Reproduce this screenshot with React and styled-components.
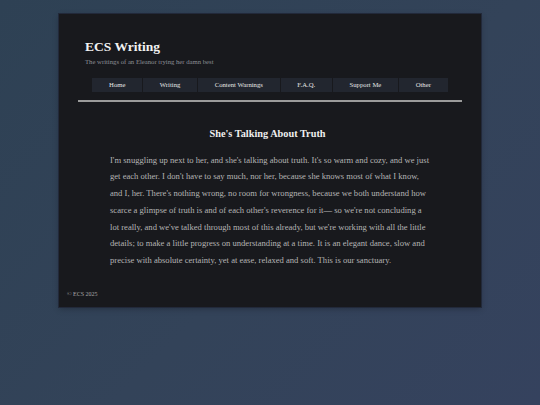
import React from "react";
import styled, { createGlobalStyle } from "styled-components";

const Global = createGlobalStyle`
  html, body { margin: 0; padding: 0; }
  body {
    min-height: 405px;
    background: linear-gradient(135deg, #2e4154 0%, #334359 55%, #35425e 100%);
    font-family: "Liberation Serif", "Times New Roman", serif;
  }
`;

const Page = styled.div`
  padding-top: 14px;
  display: flex;
  justify-content: center;
`;

const Container = styled.div`
  width: 422px;
  background: #18191d;
  box-shadow: 0 0 0 1px #22293a, 0 2px 6px rgba(0, 0, 0, 0.25);
  padding: 25px 0 9px;
  box-sizing: border-box;
`;

const Header = styled.header`
  padding-left: 26px;
`;

const Title = styled.h1`
  margin: 0;
  font-size: 13.5px;
  line-height: 15.5px;
  font-weight: bold;
  color: #f2f2f2;
`;

const Subtitle = styled.p`
  margin: 3px 0 0;
  font-size: 6.7px;
  line-height: 7.8px;
  color: #8d8f95;
`;

const Nav = styled.nav`
  display: flex;
  justify-content: center;
  gap: 1px;
  margin-top: 13px;
`;

const NavItem = styled.a`
  display: block;
  background: #22262f;
  color: #e6e6e6;
  font-size: 6.7px;
  line-height: 13.5px;
  padding: 0 16.7px;
  text-decoration: none;
`;

const Rule = styled.hr`
  margin: 8.5px 19px 0;
  border: none;
  height: 2px;
  background: #9b9b9b;
`;

const Article = styled.article`
  display: flex;
  flex-direction: column;
  align-items: center;
`;

const Heading = styled.h2`
  margin: 26px 0 0;
  font-size: 10.3px;
  line-height: 12.4px;
  font-weight: bold;
  color: #efefef;
  transform: translateX(-2.5px);
`;

const Para = styled.p`
  margin: 11px 0 0;
  width: 320px;
  font-size: 8.6px;
  line-height: 16.7px;
  color: #b4b4b4;
`;

const Line = styled.span`
  display: block;
  white-space: nowrap;
`;

const Footer = styled.footer`
  margin-top: 22px;
  padding-left: 8px;
  font-size: 6px;
  line-height: 7.2px;
  color: #a8a8a8;
`;

const links = ["Home", "Writing", "Content Warnings", "F.A.Q.", "Support Me", "Other"];

const lines = [
  "I'm snuggling up next to her, and she's talking about truth. It's so warm and cozy, and we just",
  "get each other. I don't have to say much, nor her, because she knows most of what I know,",
  "and I, her. There's nothing wrong, no room for wrongness, because we both understand how",
  "scarce a glimpse of truth is and of each other's reverence for it— so we're not concluding a",
  "lot really, and we've talked through most of this already, but we're working with all the little",
  "details; to make a little progress on understanding at a time. It is an elegant dance, slow and",
  "precise with absolute certainty, yet at ease, relaxed and soft. This is our sanctuary.",
];

export default function App() {
  return (
    <>
      <Global />
      <Page>
        <Container>
          <Header>
            <Title>ECS Writing</Title>
            <Subtitle>The writings of an Eleanor trying her damn best</Subtitle>
          </Header>
          <Nav>
            {links.map((l) => (
              <NavItem key={l} href="#">{l}</NavItem>
            ))}
          </Nav>
          <Rule />
          <Article>
            <Heading>She's Talking About Truth</Heading>
            <Para>
              {lines.map((t, i) => (
                <Line key={i}>{t}</Line>
              ))}
            </Para>
          </Article>
          <Footer>© ECS 2025</Footer>
        </Container>
      </Page>
    </>
  );
}
